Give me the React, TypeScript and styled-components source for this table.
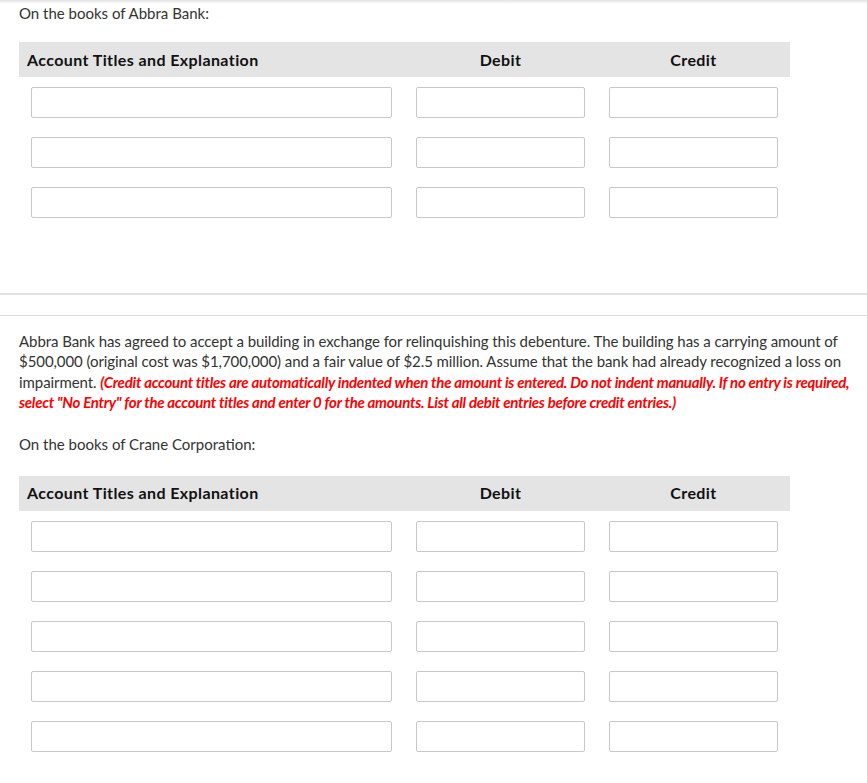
import React from "react";
import styled, { createGlobalStyle } from "styled-components";

const GlobalStyle = createGlobalStyle`
  body {
    margin: 0;
    background: #fff;
    font-family: Lato, "Open Sans", sans-serif;
    font-size: 15px;
    line-height: 20px;
    color: #333;
  }
`;

const TopShade = styled.div`
  height: 4px;
  background: linear-gradient(#e2e2e2, #fff);
`;

const Section = styled.div<{ $top?: boolean }>`
  padding: ${(props) => (props.$top ? "0 6px 0 19px" : "15px 6px 0 19px")};
  border-top: ${(props) => (props.$top ? "none" : "1px solid #dcdcdc")};
  border-bottom: ${(props) => (props.$top ? "2px solid #e0e0e0" : "none")};
  margin-top: ${(props) => (props.$top ? "0" : "20px")};
`;

const Caption = styled.div`
  margin-top: -1px;
  color: #333;
`;

const Table = styled.div<{ $gap: number }>`
  width: 771px;
  margin-top: ${(props) => props.$gap}px;
`;

const Grid = styled.div`
  display: grid;
  grid-template-columns: 385px 193px 193px;
`;

const HeaderRow = styled(Grid)`
  height: 35px;
  align-items: center;
  background: #e4e4e4;
  font-size: 16px;
  font-weight: 700;
  letter-spacing: 0.4px;
  color: #111;
`;

const HeadCell = styled.div<{ $center?: boolean }>`
  padding-left: ${(props) => (props.$center ? "0" : "8px")};
  text-align: ${(props) => (props.$center ? "center" : "left")};
`;

const Row = styled(Grid)`
  padding: 10px 0 9px;
`;

const Cell = styled.div`
  padding: 0 12px;
`;

const Field = styled.input`
  display: block;
  box-sizing: border-box;
  width: 100%;
  height: 31px;
  border: 1px solid #c8c8c8;
  border-radius: 2px;
  background: #fff;
`;

const Paragraph = styled.p`
  margin: 0;
  line-height: 20.4px;
  letter-spacing: -0.07px;
`;

const Note = styled.span`
  color: #f00;
  font-weight: 700;
  font-style: italic;
  letter-spacing: -0.26px;
`;

const SubCaption = styled.div`
  margin-top: 21px;
  color: #333;
`;

function Journal({ rows, gap }: { rows: number; gap: number }) {
  return (
    <Table $gap={gap}>
      <HeaderRow>
        <HeadCell>Account Titles and Explanation</HeadCell>
        <HeadCell $center>Debit</HeadCell>
        <HeadCell $center>Credit</HeadCell>
      </HeaderRow>
      {Array.from({ length: rows }).map((_, i) => (
        <Row key={i}>
          <Cell>
            <Field type="text" />
          </Cell>
          <Cell>
            <Field type="text" />
          </Cell>
          <Cell>
            <Field type="text" />
          </Cell>
        </Row>
      ))}
    </Table>
  );
}

export default function App() {
  return (
    <>
      <GlobalStyle />
      <TopShade />
      <Section $top>
        <Caption>On the books of Abbra Bank:</Caption>
        <Journal rows={3} gap={19} />
        <div style={{ height: 66 }} />
      </Section>
      <Section>
        <Paragraph>
          Abbra Bank has agreed to accept a building in exchange for
          relinquishing this debenture. The building has a carrying amount of
          $500,000 (original cost was $1,700,000) and a fair value of $2.5
          million. Assume that the bank had already recognized a loss on
          impairment.{" "}
          <Note>
            (Credit account titles are automatically indented when the amount
            is entered. Do not indent manually. If no entry is required, select
            "No Entry" for the account titles and enter 0 for the amounts. List
            all debit entries before credit entries.)
          </Note>
        </Paragraph>
        <SubCaption>On the books of Crane Corporation:</SubCaption>
        <Journal rows={5} gap={22} />
      </Section>
    </>
  );
}
